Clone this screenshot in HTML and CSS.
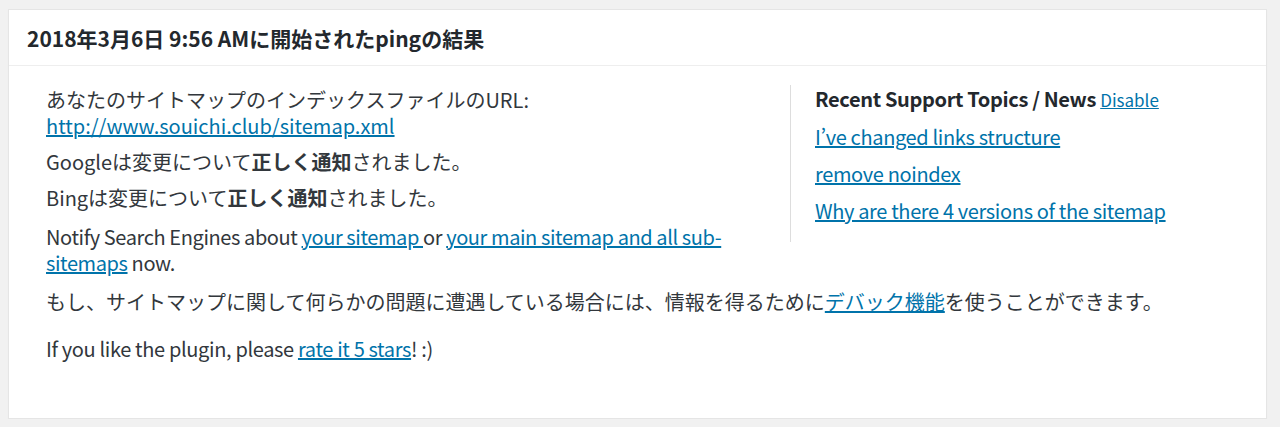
FILE: index.html
```html
<!DOCTYPE html>
<html lang="ja">
  <head>
  <meta charset="UTF-8">
  <meta name="viewport" content="width=device-width,initial-scale=1.0">
  <link rel="stylesheet" href="styles.css">
  </head>
  <body>
    <div class="postbox">
      <h2 class="hndle">2018年3月6日 9:56 AMに開始されたpingの結果</h2>
      <div class="inside">
        <div class="ping_cols">
          <ul class="ping_result">
            <li>あなたのサイトマップのインデックスファイルのURL: <a href="#">http://www.souichi.club/sitemap.xml</a></li>
            <li>Googleは変更について<b>正しく通知</b>されました。</li>
            <li>Bingは変更について<b>正しく通知</b>されました。</li>
            <li class="notify">Notify Search Engines about <a href="#">your sitemap </a>or <a href="#">your main sitemap and all sub-sitemaps</a> now.</li>
          </ul>
          <div class="support_news">
            <h4 class="news_title">Recent Support Topics / News <a href="#" class="disable_link">Disable</a></h4>
            <a href="#" class="news_link">I’ve changed links structure</a>
            <a href="#" class="news_link">remove noindex</a>
            <a href="#" class="news_link">Why are there 4 versions of the sitemap</a>
          </div>
        </div>
        <p class="debug_note">もし、サイトマップに関して何らかの問題に遭遇している場合には、情報を得るために<a href="#">デバック機能</a>を使うことができます。</p>
        <p class="rate_note">If you like the plugin, please <a href="#">rate it 5 stars</a>! :)</p>
      </div>
    </div>
  </body>
</html>
```

FILE: styles.css
```css
*{
  margin:0;
  padding:0;
  box-sizing:border-box;
}
body{
  background-color:#f1f1f1;
  padding:9px 13px 0 8px;
  font-family:"Noto Sans CJK JP","Noto Sans",sans-serif;
  font-size:20px;
  line-height:26px;
  color:#32373c;
}
a{
  color:#0073aa;
  text-decoration:underline;
}
.postbox{
  background-color:#ffffff;
  border:1px solid #e5e5e5;
  box-shadow:0 1px 1px rgba(0,0,0,0.04);
  height:410px;
}
.hndle{
  font-size:21px;
  font-weight:bold;
  color:#23282d;
  height:56px;
  line-height:56px;
  padding:0 18px;
  border-bottom:1px solid #eeeeee;
}
.inside{
  padding:19px 37px 0 37px;
}
.ping_cols{
  display:flex;
  align-items:flex-start;
}
.ping_result{
  list-style:none;
  width:720px;
  padding-top:2px;
}
.ping_result li{
  margin-bottom:10px;
}
.ping_result li.notify{
  margin-top:13px;
  margin-bottom:0;
  letter-spacing:-0.4px;
}
.support_news{
  margin-left:24px;
  border-left:1px solid #dddddd;
  padding:1px 0 18px 24px;
  letter-spacing:-0.35px;
}
.news_title{
  font-size:20px;
  font-weight:600;
  color:#23282d;
  margin-bottom:11px;
}
.disable_link{
  font-size:17px;
  font-weight:normal;
  letter-spacing:0;
}
.news_link{
  display:block;
  margin-bottom:11px;
}
.news_link:last-child{
  margin-bottom:0;
}
.debug_note{
  margin-top:13px;
}
.rate_note{
  margin-top:21px;
  letter-spacing:-0.35px;
}
```
